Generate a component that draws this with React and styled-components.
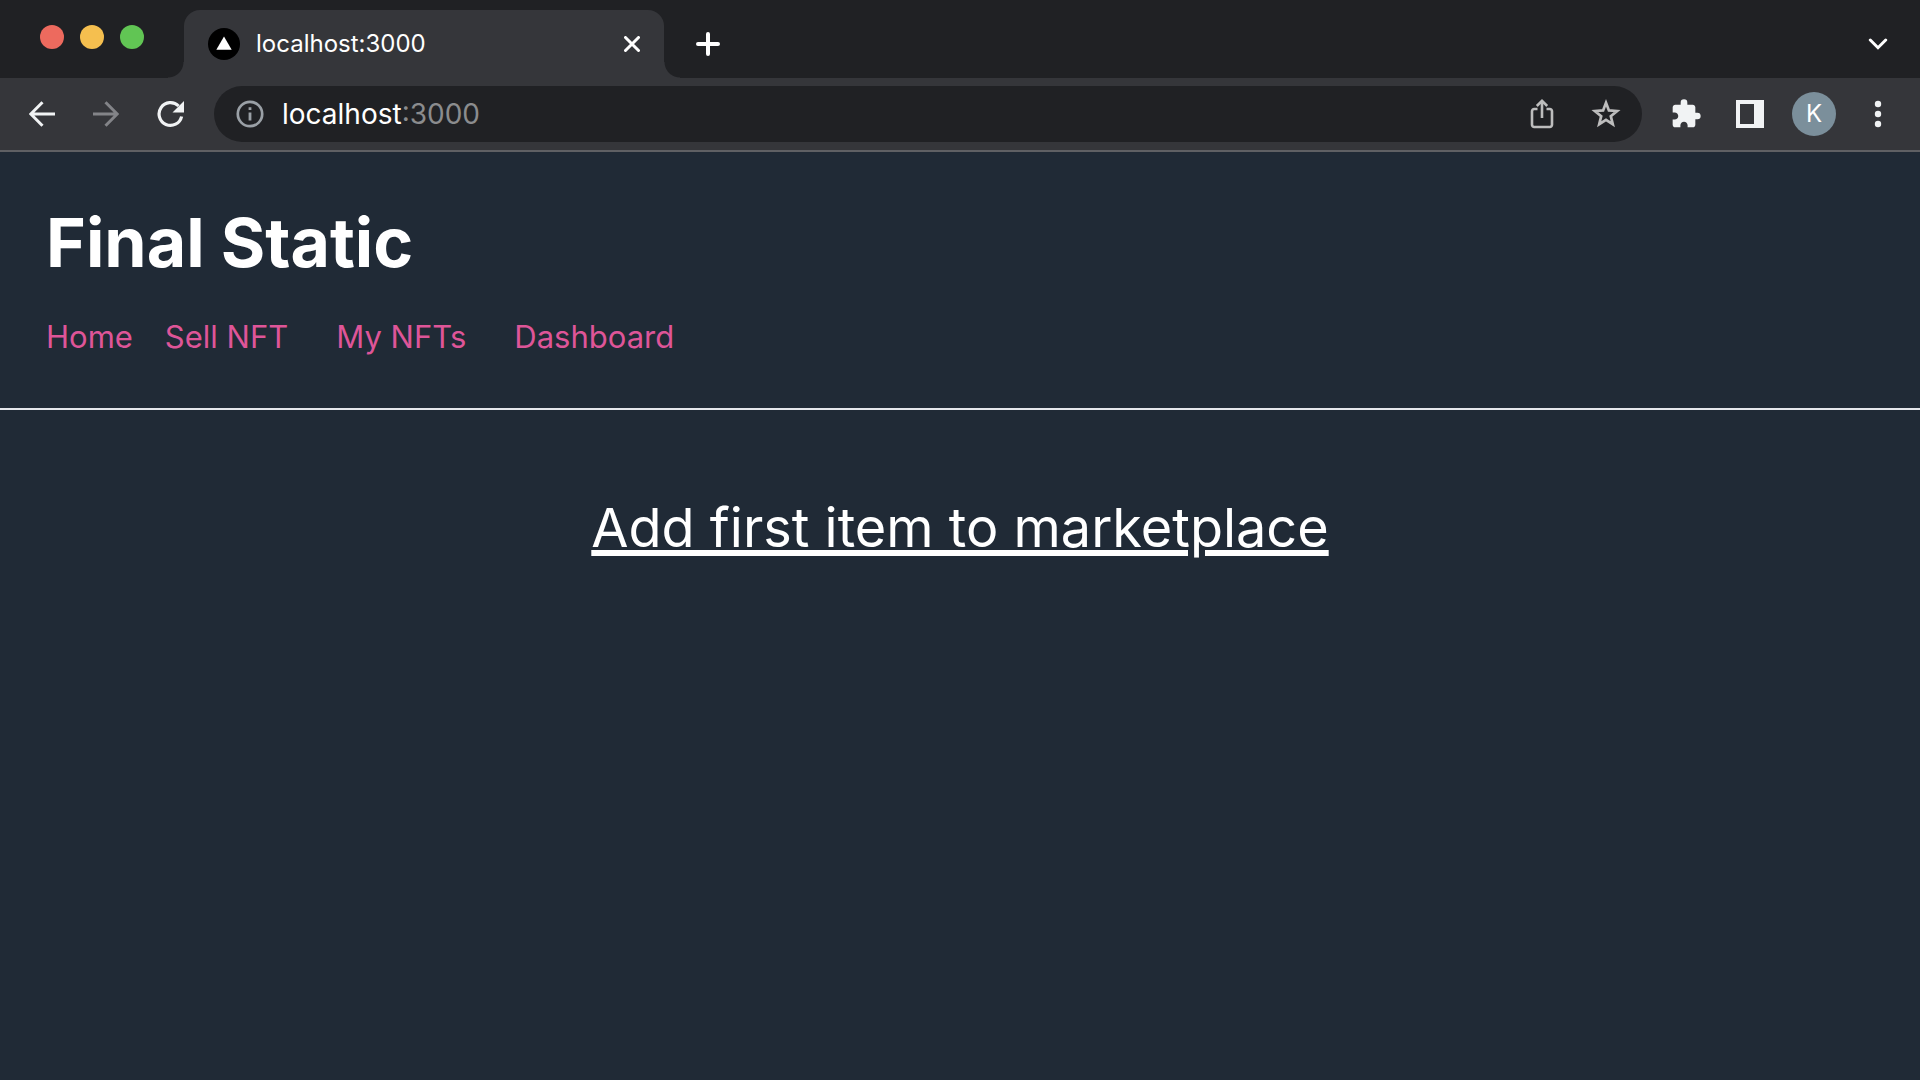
import React from 'react';
import styled, { createGlobalStyle } from 'styled-components';

const GlobalStyle = createGlobalStyle`
  *, *::before, *::after { box-sizing: border-box; }
  html, body, #root { margin: 0; height: 100%; }
  body {
    background: #202a36;
    color: #ffffff;
    font-family: Inter, "Liberation Sans", sans-serif;
  }
  button, input { font: inherit; color: inherit; margin: 0; border: 0; padding: 0; background: none; }
  button { cursor: pointer; }
  svg { display: block; }
`;

const Window = styled.div`
  min-height: 100%;
  display: flex;
  flex-direction: column;
`;

const TabStrip = styled.div`
  display: flex;
  align-items: stretch;
  height: 78px;
  padding: 10px 10px 0 40px;
  background: #202124;
`;

const TrafficLights = styled.div`
  display: flex;
  gap: 16px;
  padding-top: 15px;
  margin-right: 40px;
`;

const Light = styled.button`
  width: 24px;
  height: 24px;
  border-radius: 50%;
  background: ${(p) => p.$color};
`;

const Tab = styled.div`
  position: relative;
  display: flex;
  align-items: center;
  gap: 16px;
  width: 480px;
  padding: 0 16px 0 24px;
  border-radius: 16px 16px 0 0;
  background: #35363a;

  &::before, &::after {
    content: "";
    position: absolute;
    bottom: 0;
    width: 16px;
    height: 16px;
  }
  &::before {
    right: 100%;
    background: radial-gradient(circle at 0 0, transparent 15px, #35363a 16px);
  }
  &::after {
    left: 100%;
    background: radial-gradient(circle at 100% 0, transparent 15px, #35363a 16px);
  }
`;

const TabTitle = styled.span`
  flex: 1;
  font-size: 24px;
  line-height: 32px;
`;

const StripButton = styled.button`
  display: grid;
  place-items: center;
  width: ${(p) => p.$width}px;
`;

const Spacer = styled.div`
  flex: 1;
`;

const Toolbar = styled.div`
  display: flex;
  align-items: center;
  gap: 12px;
  height: 74px;
  padding: 0 10px;
  background: #35363a;
  border-bottom: 2px solid #5f6064;
`;

const ButtonGroup = styled.div`
  display: flex;
`;

const ToolButton = styled.button`
  display: grid;
  place-items: center;
  width: 64px;
  height: 56px;
  &:disabled { cursor: default; }
`;

const AddressBar = styled.form`
  flex: 1;
  display: flex;
  align-items: center;
  height: 56px;
  padding: 0 4px 0 22px;
  border-radius: 28px;
  background: #202124;
  font-size: 28px;
  line-height: 36px;
`;

const AddressText = styled.label`
  flex: 1;
  display: flex;
  margin-left: 18px;
`;

const HostInput = styled.input`
  field-sizing: content;
  outline: 0;
  line-height: 36px;
`;

const Port = styled.span`
  color: #8b8c8e;
`;

const Avatar = styled.span`
  display: grid;
  place-items: center;
  width: 44px;
  height: 44px;
  border-radius: 50%;
  background: #7b8f9b;
  font-size: 24px;
  line-height: 32px;
`;

const Header = styled.header`
  padding: 50px 46px 46px;
  border-bottom: 2px solid #e5e7eb;
`;

const Brand = styled.h1`
  margin: 0;
  font-size: 68px;
  line-height: 80px;
  font-weight: 700;
`;

const Nav = styled.nav`
  display: flex;
  gap: 48px;
  margin-top: 30px;
`;

const NavGroup = styled.div`
  display: flex;
  gap: 32px;
`;

const NavLink = styled.a`
  color: #de5598;
  font-size: 31px;
  line-height: 50px;
  text-decoration: none;
`;

const Main = styled.main`
  display: flex;
  justify-content: center;
  padding: 80px 46px;
`;

const EmptyTitle = styled.h2`
  margin: 0;
  font-size: 54px;
  line-height: 76px;
  font-weight: 400;
  text-decoration: underline;
  text-decoration-thickness: 6px;
  text-underline-offset: 3px;
`;

const BackIcon = () => (
  <svg width="26" height="26" viewBox="0 0 26 26" fill="none" stroke="#f1f3f4" strokeWidth="3">
    <path d="M26 13H2.5M13.5 1.2 1.8 13l11.7 11.8" />
  </svg>
);

const ForwardIcon = () => (
  <svg width="26" height="26" viewBox="0 0 26 26" fill="none" stroke="#838488" strokeWidth="3">
    <path d="M0 13h23.5M12.5 1.2 24.2 13 12.5 24.8" />
  </svg>
);

const ReloadIcon = () => (
  <svg width="28" height="28" viewBox="0 0 28 28">
    <path d="M25.600 16.500A11.400 11.400 0 1 1 22.600 6" fill="none" stroke="#f1f3f4" strokeWidth="3.2" />
    <path d="M28 1v11.500H16.500z" fill="#f1f3f4" />
  </svg>
);

const InfoIcon = () => (
  <svg width="28" height="28" viewBox="0 0 28 28">
    <circle cx="14" cy="14" r="12.2" fill="none" stroke="#9aa0a6" strokeWidth="2.7" />
    <path d="M12.6 7.3h2.8v2.8h-2.8zM12.6 12.6h2.8v8h-2.8z" fill="#9aa0a6" />
  </svg>
);

const ShareIcon = () => (
  <svg width="24" height="30" viewBox="0 0 24 30" fill="none" stroke="#bdbdbd" strokeWidth="2.6">
    <path d="M7.5 10H4.200A2.200 2.200 0 0 0 2 12.200v13.600A2.200 2.200 0 0 0 4.200 28h15.600a2.200 2.200 0 0 0 2.200-2.200V12.200A2.200 2.200 0 0 0 19.800 10h-3.300M12 19V2.500M6.800 7 12 1.900 17.200 7" />
  </svg>
);

const StarIcon = () => (
  <svg width="30" height="30" viewBox="0 0 30 30" fill="none" stroke="#bdbdbd" strokeWidth="2.7">
    <path d="m15 3.800 2.900 7.600 8.200.6-6.300 5.200 2 8-6.800-4.300-6.800 4.300 2-8-6.300-5.200 8.200-.6z" />
  </svg>
);

const PuzzleIcon = () => (
  <svg width="32" height="32" viewBox="0 0 24 24" fill="#f1f3f4">
    <path d="M20.500 11H19V7c0-1.100-.9-2-2-2h-4V3.500a2.500 2.500 0 0 0-5 0V5H4c-1.100 0-1.990.9-1.990 2v3.800H3.500c1.490 0 2.700 1.210 2.700 2.700s-1.210 2.700-2.700 2.700H2V20c0 1.100.9 2 2 2h3.800v-1.500c0-1.490 1.210-2.700 2.700-2.700s2.700 1.210 2.700 2.700V22H17c1.100 0 2-.9 2-2v-4h1.500a2.500 2.500 0 0 0 0-5z" />
  </svg>
);

const PanelIcon = () => (
  <svg width="28" height="28" viewBox="0 0 28 28" fill="#f1f3f4">
    <path fillRule="evenodd" d="M0 0h28v28H0zM4 4v20h14V4z" />
  </svg>
);

const MenuIcon = () => (
  <svg width="8" height="28" viewBox="0 0 8 28" fill="#f1f3f4">
    <circle cx="4" cy="4" r="3.200" />
    <circle cx="4" cy="14" r="3.200" />
    <circle cx="4" cy="24" r="3.200" />
  </svg>
);

const Favicon = () => (
  <svg width="32" height="32" viewBox="0 0 32 32">
    <circle cx="16" cy="16" r="16" fill="#000000" />
    <path d="m16 8.500 7.700 13.300H8.300z" fill="#ffffff" />
  </svg>
);

const CloseIcon = () => (
  <svg width="16" height="16" viewBox="0 0 16 16" stroke="#ffffff" strokeWidth="3" strokeLinecap="round">
    <path d="m1.500 1.500 13 13M14.500 1.500l-13 13" />
  </svg>
);

const PlusIcon = () => (
  <svg width="24" height="24" viewBox="0 0 24 24" stroke="#ffffff" strokeWidth="4" strokeLinecap="round">
    <path d="M12 2v20M2 12h20" />
  </svg>
);

const ChevronIcon = () => (
  <svg width="20" height="12" viewBox="0 0 20 12" fill="none" stroke="#ffffff" strokeWidth="3" strokeLinecap="round">
    <path d="m2.300 2 7.700 7.700L17.700 2" />
  </svg>
);

export default function App() {
  return (
    <Window>
      <GlobalStyle />
      <TabStrip>
        <TrafficLights>
          <Light type="button" aria-label="Close window" $color="#ed6a5e" />
          <Light type="button" aria-label="Minimize window" $color="#f5bf4f" />
          <Light type="button" aria-label="Zoom window" $color="#61c554" />
        </TrafficLights>
        <Tab>
          <Favicon />
          <TabTitle>localhost:3000</TabTitle>
          <StripButton type="button" aria-label="Close tab" $width={32}><CloseIcon /></StripButton>
        </Tab>
        <StripButton type="button" aria-label="New tab" $width={88}><PlusIcon /></StripButton>
        <Spacer />
        <StripButton type="button" aria-label="Search tabs" $width={64}><ChevronIcon /></StripButton>
      </TabStrip>
      <Toolbar>
        <ButtonGroup>
          <ToolButton type="button" aria-label="Back"><BackIcon /></ToolButton>
          <ToolButton type="button" aria-label="Forward" disabled><ForwardIcon /></ToolButton>
          <ToolButton type="button" aria-label="Reload"><ReloadIcon /></ToolButton>
        </ButtonGroup>
        <AddressBar onSubmit={(e) => e.preventDefault()}>
          <InfoIcon />
          <AddressText>
            <HostInput type="text" aria-label="Address" defaultValue="localhost" />
            <Port>:3000</Port>
          </AddressText>
          <ToolButton type="button" aria-label="Share"><ShareIcon /></ToolButton>
          <ToolButton type="button" aria-label="Bookmark"><StarIcon /></ToolButton>
        </AddressBar>
        <ButtonGroup>
          <ToolButton type="button" aria-label="Extensions"><PuzzleIcon /></ToolButton>
          <ToolButton type="button" aria-label="Side panel"><PanelIcon /></ToolButton>
          <ToolButton type="button" aria-label="Profile"><Avatar>K</Avatar></ToolButton>
          <ToolButton type="button" aria-label="Menu"><MenuIcon /></ToolButton>
        </ButtonGroup>
      </Toolbar>
      <Header>
        <Brand>Final Static</Brand>
        <Nav>
          <NavGroup>
            <NavLink href="#home">Home</NavLink>
            <NavLink href="#sell">Sell NFT</NavLink>
          </NavGroup>
          <NavLink href="#nfts">My NFTs</NavLink>
          <NavLink href="#dashboard">Dashboard</NavLink>
        </Nav>
      </Header>
      <Main>
        <EmptyTitle>Add first item to marketplace</EmptyTitle>
      </Main>
    </Window>
  );
}
